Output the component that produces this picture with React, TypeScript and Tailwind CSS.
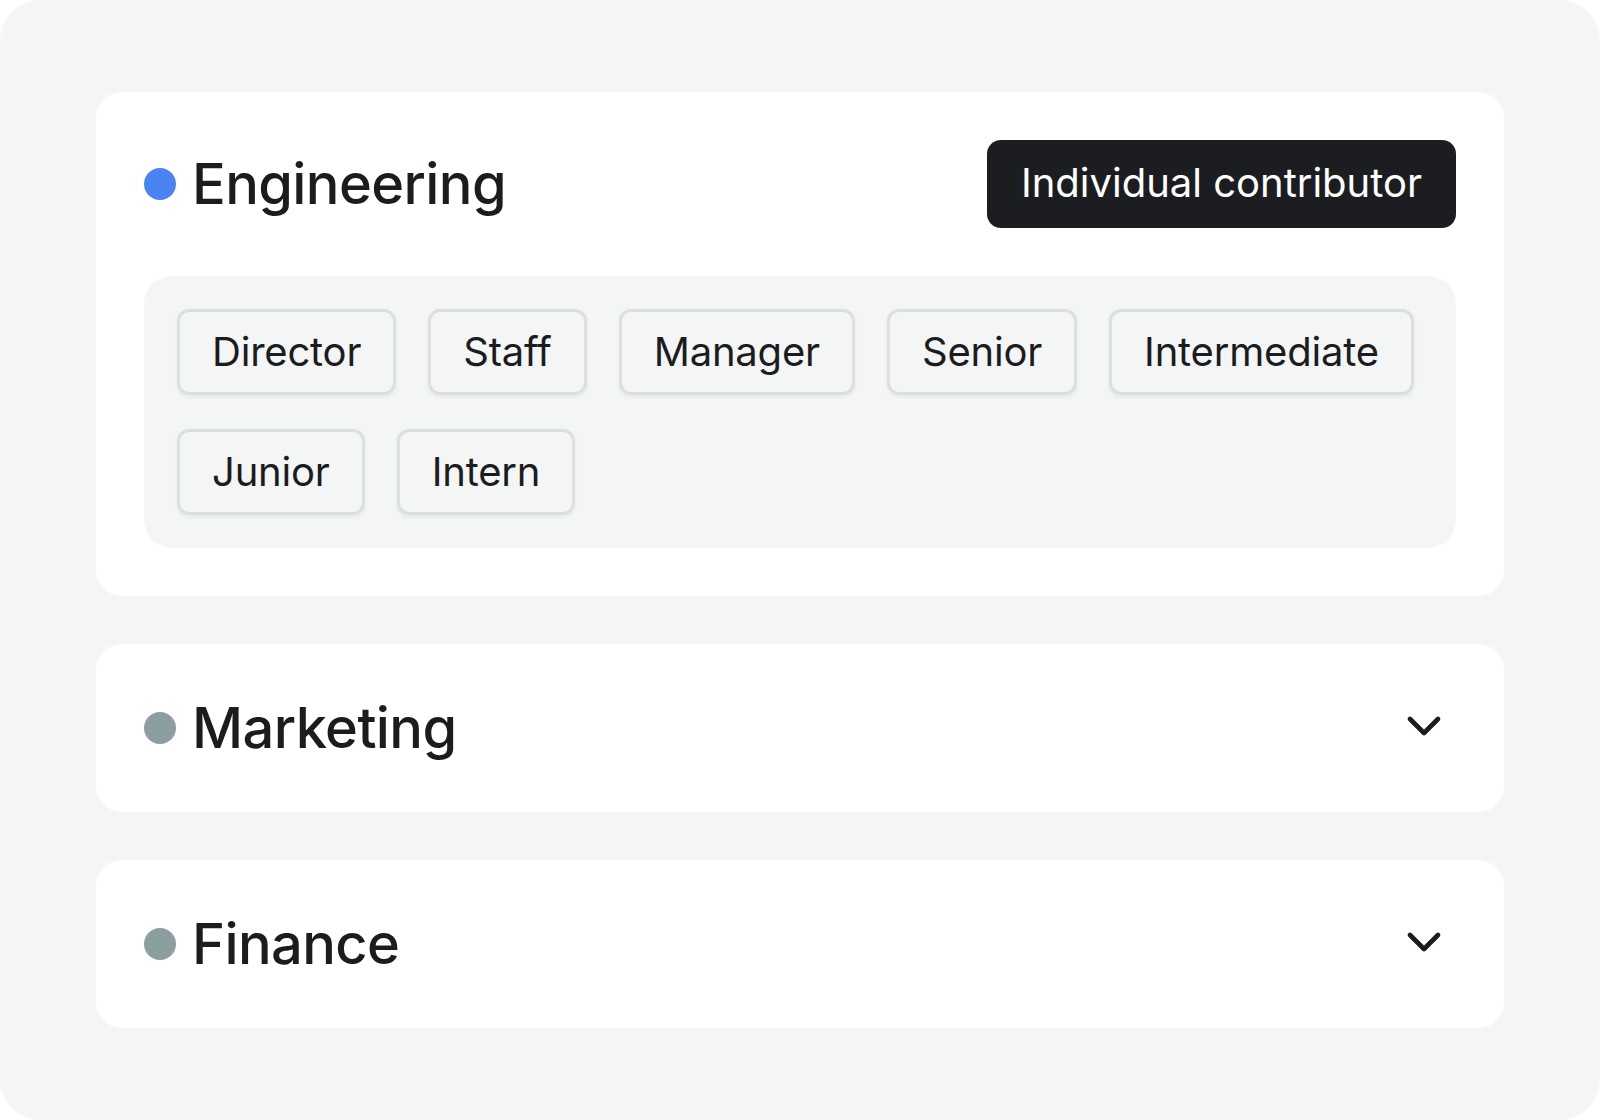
import React from 'react';
import { ChevronDown } from 'lucide-react';

const levels = ['Director', 'Staff', 'Manager', 'Senior', 'Intermediate', 'Junior', 'Intern'];

const departments = [
  { name: 'Engineering', color: 'bg-[#4a84f2]', open: true },
  { name: 'Marketing', color: 'bg-[#8a9ea0]', open: false },
  { name: 'Finance', color: 'bg-[#8a9ea0]', open: false },
];

function Title({ name, color }: { name: string; color: string }) {
  return (
    <div className="flex items-center gap-[16px]">
      <div className={`w-[32px] h-[32px] rounded-full ${color}`} />
      <h2 className="text-[56px] leading-[72px] font-medium text-[#1b1c1e] tracking-[-0.6px]">{name}</h2>
    </div>
  );
}

export default function App() {
  return (
    <div className="min-h-screen bg-white" style={{ fontFamily: 'Inter, "Noto Sans", sans-serif' }}>
      <div className="w-[1600px] h-[1120px] bg-[#f5f5f5] rounded-[40px] px-[96px] py-[92px] flex flex-col gap-[48px]">
        {departments.map((dept) =>
          dept.open ? (
            <div key={dept.name} className="bg-white rounded-[26px] p-[48px] flex flex-col gap-[48px]">
              <div className="flex items-center justify-between">
                <Title name={dept.name} color={dept.color} />
                <button className="h-[88px] px-[34px] pb-[3px] rounded-[14px] bg-[#1c1d21] text-white text-[40px]">
                  Individual contributor
                </button>
              </div>
              <div className="bg-[#f4f5f5] rounded-[28px] p-[33px] flex flex-wrap gap-x-[32px] gap-y-[34px]">
                {levels.map((level) => (
                  <div
                    key={level}
                    className="h-[86px] px-[32px] flex items-center rounded-[12px] border-[3px] border-[#dcdfdf] shadow-[0_2px_4px_rgba(0,0,0,0.06)] text-[40px] tracking-[-0.2px] text-[#1b1c1e]"
                  >
                    {level}
                  </div>
                ))}
              </div>
            </div>
          ) : (
            <div key={dept.name} className="bg-white rounded-[26px] px-[48px] py-[48px] flex items-center justify-between">
              <Title name={dept.name} color={dept.color} />
              <ChevronDown className="w-[56px] h-[56px] mr-[4px] mb-[4px] text-[#1b1c1e]" strokeWidth={2} />
            </div>
          )
        )}
      </div>
    </div>
  );
}
